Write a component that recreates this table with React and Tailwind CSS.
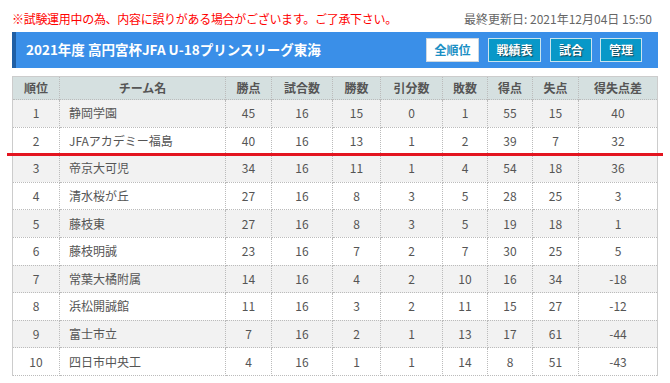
import React from "react";

const cols = [
  { name: "順位", w: "w-[47px]" },
  { name: "チーム名", w: "w-[166px]" },
  { name: "勝点", w: "w-[46px]" },
  { name: "試合数", w: "w-[61px]" },
  { name: "勝数", w: "w-[48px]" },
  { name: "引分数", w: "w-[62px]" },
  { name: "敗数", w: "w-[45px]" },
  { name: "得点", w: "w-[45px]" },
  { name: "失点", w: "w-[46px]" },
  { name: "得失点差", w: "w-[79px]" },
];

const rows = [
  [1, "静岡学園", 45, 16, 15, 0, 1, 55, 15, 40],
  [2, "JFAアカデミー福島", 40, 16, 13, 1, 2, 39, 7, 32],
  [3, "帝京大可児", 34, 16, 11, 1, 4, 54, 18, 36],
  [4, "清水桜が丘", 27, 16, 8, 3, 5, 28, 25, 3],
  [5, "藤枝東", 27, 16, 8, 3, 5, 19, 18, 1],
  [6, "藤枝明誠", 23, 16, 7, 2, 7, 30, 25, 5],
  [7, "常葉大橘附属", 14, 16, 4, 2, 10, 16, 34, -18],
  [8, "浜松開誠館", 11, 16, 3, 2, 11, 15, 27, -12],
  [9, "富士市立", 7, 16, 2, 1, 13, 17, 61, -44],
  [10, "四日市中央工", 4, 16, 1, 1, 14, 8, 51, -43],
];

export default function App() {
  return (
    <div className="relative w-[670px] h-[383px] overflow-hidden bg-white font-['Noto_Sans_CJK_JP',sans-serif] text-[12px] text-[#555]">
      <div className="flex items-center justify-between h-[32px] pl-[12px] pr-[18px] pt-[6px]">
        <span className="text-[#ff0000] leading-none tracking-[-0.3px]">※試験運用中の為、内容に誤りがある場合がございます。ご了承下さい。</span>
        <span className="text-[#666] leading-none">最終更新日: 2021年12月04日 15:50</span>
      </div>
      <div className="mx-[12px] h-[36px] bg-[#3a8fe8] border-l-[4px] border-[#1f5fa5] flex items-center justify-between pl-[10px] pr-[16px]">
        <span className="text-white font-bold text-[13.5px] leading-none">2021年度 高円宮杯JFA U-18プリンスリーグ東海</span>
        <div className="flex items-center">
          <div className="w-[53px] h-[24px] bg-white border border-[#cfd8df] flex items-center justify-center text-[#1a8fc4] font-bold text-[12px]">全順位</div>
          <div className="ml-[9px] w-[53px] h-[24px] bg-[#0898c8] border border-[#c9e4ee] flex items-center justify-center text-white font-bold text-[12px] [text-shadow:1px_1px_1px_#145]">戦績表</div>
          <div className="ml-[9px] w-[42px] h-[24px] bg-[#0898c8] border border-[#c9e4ee] flex items-center justify-center text-white font-bold text-[12px] [text-shadow:1px_1px_1px_#145]">試合</div>
          <div className="ml-[8px] w-[42px] h-[24px] bg-[#0898c8] border border-[#c9e4ee] flex items-center justify-center text-white font-bold text-[12px] [text-shadow:1px_1px_1px_#145]">管理</div>
        </div>
      </div>
      <table className="mt-[8px] ml-[12px] w-[645px] border-collapse table-fixed border-x border-t border-[#cccccc]">
        <thead>
          <tr className="h-[23px] bg-[#d5e0e0]">
            {cols.map((c, i) => (
              <th
                key={i}
                className={`${c.w} font-bold text-[#555] text-center border-x border-dotted border-[#bbbbbb] p-0 leading-none`}
              >
                {c.name}
              </th>
            ))}
          </tr>
        </thead>
        <tbody>
          {rows.map((r, ri) => (
            <tr key={ri} className={`h-[27.6px] ${ri % 2 === 0 ? "bg-[#f2f2f2]" : "bg-white"}`}>
              {r.map((v, ci) => (
                <td
                  key={ci}
                  className={`border border-dotted border-[#bbbbbb] p-0 leading-none ${
                    ci === 1 ? "text-left pl-[9px]" : "text-center"
                  }`}
                >
                  {v}
                </td>
              ))}
            </tr>
          ))}
        </tbody>
      </table>
      <div className="absolute left-[7px] top-[153px] w-[656px] h-[3px] bg-[#e3141f]" />
    </div>
  );
}
